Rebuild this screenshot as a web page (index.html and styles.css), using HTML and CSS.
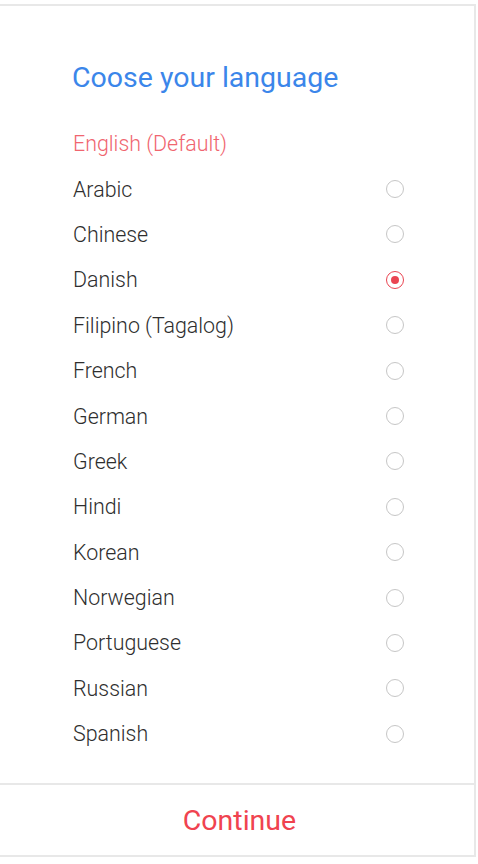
FILE: index.html
```html
<!DOCTYPE html>
<html>
<head>
<meta charset="utf-8">
<link rel="stylesheet" href="styles.css">
</head>
<body>
<div class="card">
  <div class="body">
    <h1 class="title">Coose your language</h1>
    <ul class="list">
      <li class="row default"><span>English (Default)</span></li>
      <li class="row"><span>Arabic</span><i class="radio"></i></li>
      <li class="row"><span>Chinese</span><i class="radio"></i></li>
      <li class="row"><span>Danish</span><i class="radio on"></i></li>
      <li class="row"><span>Filipino (Tagalog)</span><i class="radio"></i></li>
      <li class="row"><span>French</span><i class="radio"></i></li>
      <li class="row"><span>German</span><i class="radio"></i></li>
      <li class="row"><span>Greek</span><i class="radio"></i></li>
      <li class="row"><span>Hindi</span><i class="radio"></i></li>
      <li class="row"><span>Korean</span><i class="radio"></i></li>
      <li class="row"><span>Norwegian</span><i class="radio"></i></li>
      <li class="row"><span>Portuguese</span><i class="radio"></i></li>
      <li class="row"><span>Russian</span><i class="radio"></i></li>
      <li class="row"><span>Spanish</span><i class="radio"></i></li>
    </ul>
  </div>
  <div class="footer">Continue</div>
</div>
</body>
</html>
```
FILE: styles.css
```css
html, body {
  margin: 0;
  padding: 0;
  background: #ffffff;
}
body {
  font-family: Roboto, "Liberation Sans", sans-serif;
  width: 478px;
  height: 864px;
}
.card {
  margin-top: 4px;
  width: 474px;
  height: 849px;
  border-top: 2px solid #e8e8e8;
  border-right: 2px solid #e8e8e8;
  border-bottom: 2px solid #e8e8e8;
  display: flex;
  flex-direction: column;
}
.body {
  flex: 1;
  padding-top: 56px;
}
.title {
  margin: 0 0 27px 0;
  padding-left: 72px;
  font-size: 28.5px;
  line-height: 32px;
  font-weight: 400;
  color: #3b86ea;
}
.list {
  list-style: none;
  margin: 0;
  padding: 0;
}
.row {
  height: 45.4px;
  display: flex;
  align-items: center;
  justify-content: space-between;
  padding: 0 70px 0 73px;
  font-size: 21.4px;
  font-weight: 300;
  color: #2e2e2e;
}
.row.default {
  color: #f0656f;
}
.radio {
  width: 16px;
  height: 16px;
  border: 1.6px solid #c6c6c6;
  border-radius: 50%;
  display: flex;
  align-items: center;
  justify-content: center;
}
.radio.on {
  border-color: #ea4451;
}
.radio.on::after {
  content: "";
  width: 8px;
  height: 8px;
  border-radius: 50%;
  background: #ea4451;
}
.footer {
  height: 70px;
  border-top: 2px solid #e8e8e8;
  display: flex;
  align-items: center;
  justify-content: center;
  padding-left: 5px;
  font-size: 28.5px;
  color: #f0434f;
}
```
